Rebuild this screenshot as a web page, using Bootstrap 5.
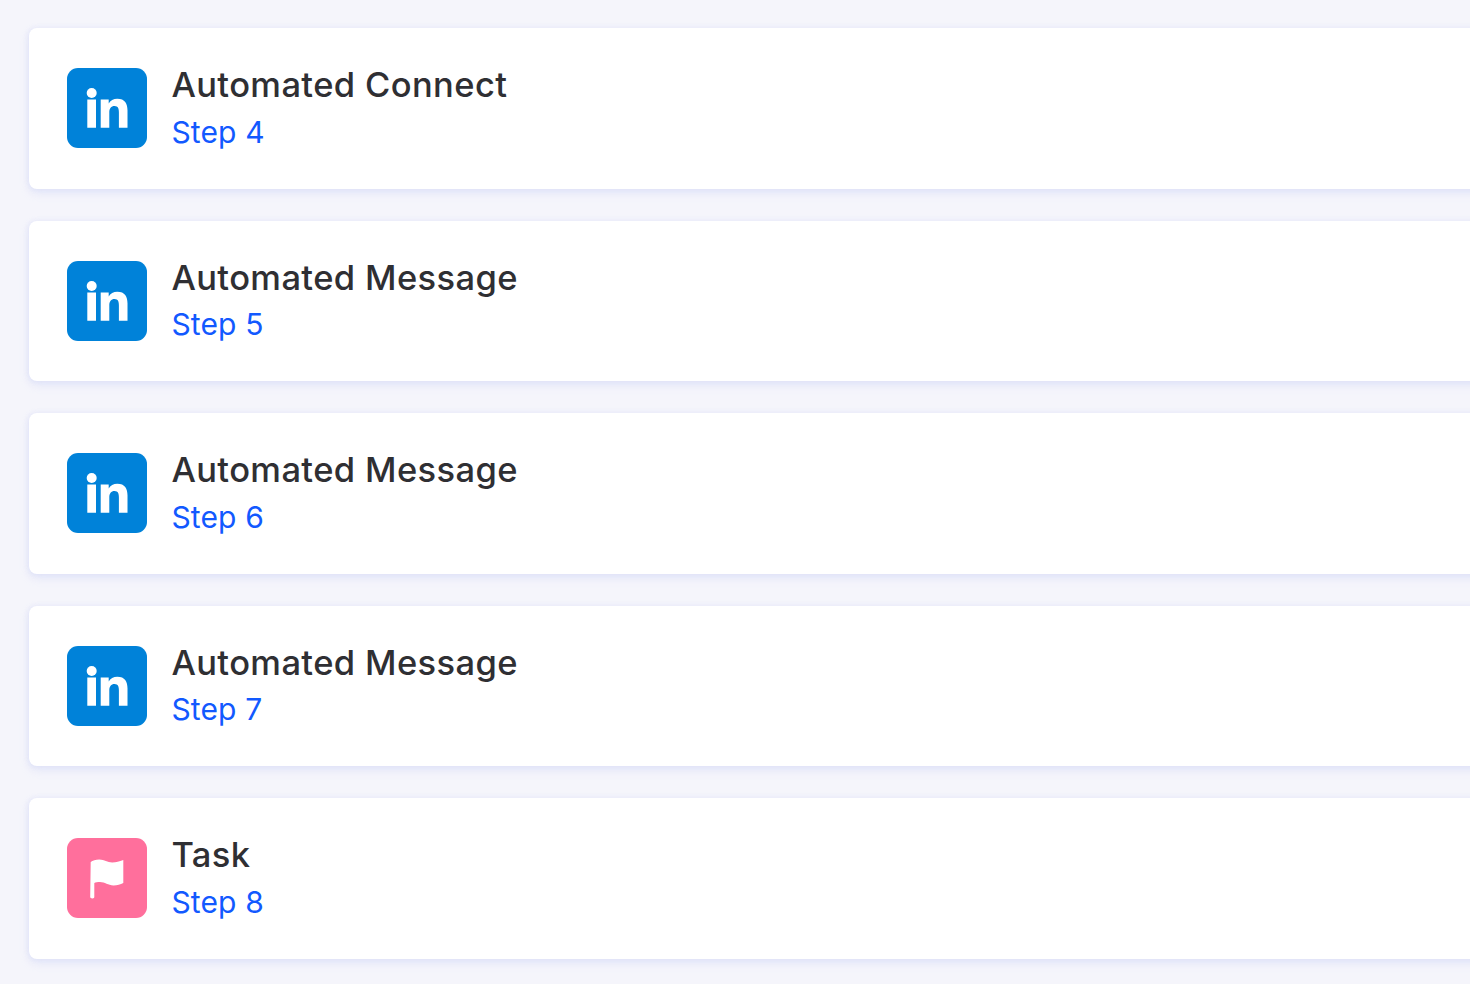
<!DOCTYPE html>
<html lang="en">
<head>
  <meta charset="UTF-8">
  <meta name="viewport" content="width=device-width, initial-scale=1">
  <title>Sequence Steps</title>
  <link href="https://cdn.jsdelivr.net/npm/bootstrap@5.3.0/dist/css/bootstrap.min.css" rel="stylesheet">
  <style>
    html, body {
      height: 100%;
      overflow: hidden;
    }
    body {
      background: #f5f5fb;
      font-family: "Inter", "Liberation Sans", sans-serif;
    }
    .step-stack {
      width: 1500px;
      margin-top: -4px;
      margin-left: 29px;
      gap: 32px;
    }
    .step-card {
      height: 160.5px;
      padding: 0 38px;
      gap: 24.4px;
      background: #fff;
      border: 0;
      border-radius: 8px;
      box-shadow: 0 4px 8px rgba(200, 208, 246, .42), -1px 0 5px rgba(215, 220, 248, .45);
    }
    .step-card-stub {
      height: 0;
      padding: 0;
    }
    .step-icon {
      width: 80px;
      height: 80px;
      flex: none;
      border-radius: 11px;
    }
    .step-icon svg {
      display: block;
    }
    .icon-linkedin { background: #0082d9; }
    .icon-task { background: #ff6f9c; }
    .step-title {
      font-size: 34.5px;
      font-weight: 450;
      line-height: 48px;
      letter-spacing: .38px;
      color: #2f2f33;
    }
    .step-num {
      font-size: 30px;
      line-height: 46px;
      letter-spacing: .15px;
      margin-top: -.3px;
      margin-bottom: .3px;
      color: #1259ff;
    }
  </style>
</head>
<body>
  <div class="step-stack d-flex flex-column">
    <div class="step-card step-card-stub"></div>

    <div class="step-card d-flex align-items-center">
      <div class="step-icon icon-linkedin">
        <svg width="80" height="80" viewBox="0 0 80 80"><circle cx="24.7" cy="25" r="5" fill="#fff"/><path fill="#fff" d="M20.3 31.5h8.7v28.2h-8.7zM33.7 31.5h8v3.9c1.6-2.8 4.8-4.7 8.6-4.7 7.6 0 10.2 4.8 10.2 11.6v17.4h-8.6V44.5c0-3.6-.8-6.4-4.3-6.4-3.6 0-5.3 2.6-5.3 6.4v15.2h-8.6z"/></svg>
      </div>
      <div>
        <div class="step-title">Automated Connect</div>
        <div class="step-num">Step 4</div>
      </div>
    </div>

    <div class="step-card d-flex align-items-center">
      <div class="step-icon icon-linkedin">
        <svg width="80" height="80" viewBox="0 0 80 80"><circle cx="24.7" cy="25" r="5" fill="#fff"/><path fill="#fff" d="M20.3 31.5h8.7v28.2h-8.7zM33.7 31.5h8v3.9c1.6-2.8 4.8-4.7 8.6-4.7 7.6 0 10.2 4.8 10.2 11.6v17.4h-8.6V44.5c0-3.6-.8-6.4-4.3-6.4-3.6 0-5.3 2.6-5.3 6.4v15.2h-8.6z"/></svg>
      </div>
      <div>
        <div class="step-title">Automated Message</div>
        <div class="step-num">Step 5</div>
      </div>
    </div>

    <div class="step-card d-flex align-items-center">
      <div class="step-icon icon-linkedin">
        <svg width="80" height="80" viewBox="0 0 80 80"><circle cx="24.7" cy="25" r="5" fill="#fff"/><path fill="#fff" d="M20.3 31.5h8.7v28.2h-8.7zM33.7 31.5h8v3.9c1.6-2.8 4.8-4.7 8.6-4.7 7.6 0 10.2 4.8 10.2 11.6v17.4h-8.6V44.5c0-3.6-.8-6.4-4.3-6.4-3.6 0-5.3 2.6-5.3 6.4v15.2h-8.6z"/></svg>
      </div>
      <div>
        <div class="step-title">Automated Message</div>
        <div class="step-num">Step 6</div>
      </div>
    </div>

    <div class="step-card d-flex align-items-center">
      <div class="step-icon icon-linkedin">
        <svg width="80" height="80" viewBox="0 0 80 80"><circle cx="24.7" cy="25" r="5" fill="#fff"/><path fill="#fff" d="M20.3 31.5h8.7v28.2h-8.7zM33.7 31.5h8v3.9c1.6-2.8 4.8-4.7 8.6-4.7 7.6 0 10.2 4.8 10.2 11.6v17.4h-8.6V44.5c0-3.6-.8-6.4-4.3-6.4-3.6 0-5.3 2.6-5.3 6.4v15.2h-8.6z"/></svg>
      </div>
      <div>
        <div class="step-title">Automated Message</div>
        <div class="step-num">Step 7</div>
      </div>
    </div>

    <div class="step-card d-flex align-items-center">
      <div class="step-icon icon-task">
        <svg width="80" height="80" viewBox="0 0 80 80"><path fill="#fff" d="M23.7 24c2-1.600 5-2.600 8.500-2.600 5.500 0 8 3 13 3 4 0 7-1 11.100-2.400V45c-3 1.500-6 2.400-9.800 2.400-5.500 0-8.500-3.400-13.500-3.400-2.500 0-4.500.4-5.700 1v14c0 .8-.6 1.400-1.900 1.400s-2.200-.6-2.200-1.400z"/></svg>
      </div>
      <div>
        <div class="step-title">Task</div>
        <div class="step-num">Step 8</div>
      </div>
    </div>
  </div>

  <script src="https://cdn.jsdelivr.net/npm/bootstrap@5.3.0/dist/js/bootstrap.bundle.min.js"></script>
</body>
</html>
